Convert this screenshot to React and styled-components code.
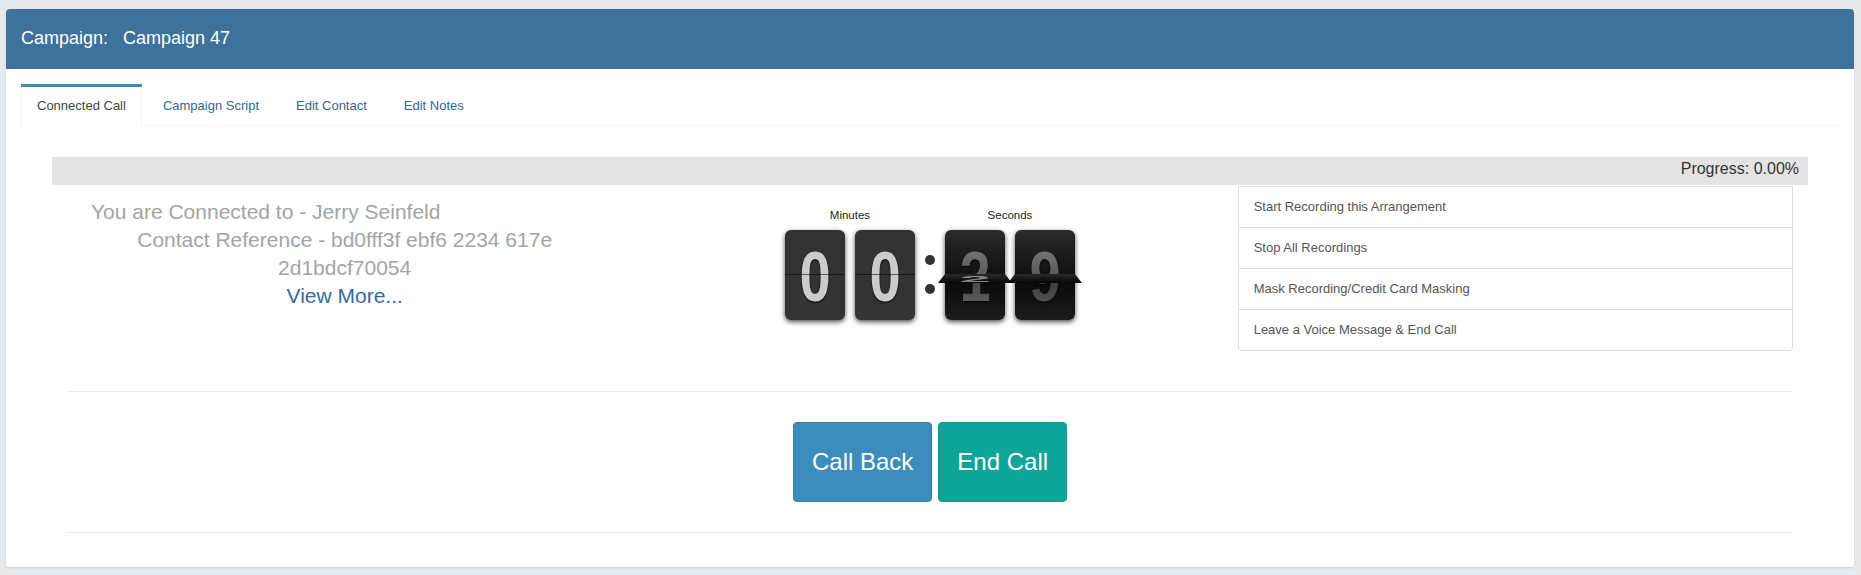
import React from "react";
import styled, { createGlobalStyle } from "styled-components";

const GlobalStyle = createGlobalStyle`
	* {
		box-sizing: border-box;
	}
	html,
	body {
		margin: 0;
		padding: 0;
		background: #e7eaed;
	}
	body {
		font-family: "Liberation Sans", Arial, Helvetica, sans-serif;
		color: #333;
	}
`;

const Page = styled.div`
	padding: 9px 7px 7px 6px;
`;

const Box = styled.div`
	background: #fff;
	border-radius: 4px 4px 2px 2px;
	box-shadow: 0 1px 2px rgba(0, 0, 0, 0.12);
	overflow: hidden;
`;

const BoxHeader = styled.div`
	display: flex;
	align-items: center;
	height: 60px;
	padding: 0 15px 1px;
	background: #3e729b;
	color: #fff;
	font-size: 18px;
`;

const CampaignName = styled.span`
	margin-left: 15px;
`;

const BoxBody = styled.div`
	padding: 15px 15px 3px;
`;

const TabBar = styled.ul`
	display: flex;
	margin: 0;
	padding: 0;
	list-style: none;
	border-bottom: 1px solid #f1f1f1;
`;

const Tab = styled.li`
	margin-right: 5px;
	margin-bottom: ${(p) => (p.$active ? "-1px" : "0")};
	border-top: 3px solid ${(p) => (p.$active ? "#3c8dbc" : "transparent")};
	background: ${(p) => (p.$active ? "#fff" : "transparent")};
`;

const TabLink = styled.a`
	display: block;
	height: ${(p) => (p.$active ? "39px" : "38px")};
	padding: 0 15px;
	line-height: 38px;
	font-size: 13px;
	color: ${(p) => (p.$active ? "#444" : "#356690")};
	text-decoration: none;
	border-left: 1px solid ${(p) => (p.$active ? "#f4f4f4" : "transparent")};
	border-right: 1px solid ${(p) => (p.$active ? "#f4f4f4" : "transparent")};
`;

const TabContent = styled.div`
	padding: 31px 31px 31px;
`;

const Progress = styled.div`
	height: 28px;
	padding-right: 9px;
	background: #e4e4e4;
	text-align: right;
	font-size: 16px;
	line-height: 24px;
	color: #333;
`;

const Row = styled.div`
	display: grid;
	grid-template-columns: repeat(3, 1fr);
`;

const Col = styled.div`
	padding: ${(p) => p.$top || 0}px 15px 0;
`;

const Connected = styled.div`
	font-size: 21px;
	line-height: 28px;
	color: #a4a4a4;
`;

const ConnectedLine = styled.div`
	padding-left: 24px;
`;

const Reference = styled.div`
	max-width: 440px;
	margin: 0 auto;
	text-align: center;
`;

const ViewMore = styled.a`
	display: block;
	text-align: center;
	color: #3a6a94;
	text-decoration: none;
`;

const Clock = styled.div`
	display: flex;
	justify-content: center;
`;

const Unit = styled.div`
	display: flex;
	flex-direction: column;
	align-items: center;
`;

const UnitLabel = styled.div`
	height: 14px;
	margin-bottom: 8px;
	font-size: 11.5px;
	line-height: 14px;
	color: #222;
`;

const Cards = styled.div`
	display: flex;
	gap: 10px;
`;

const Divider = styled.div`
	display: flex;
	flex-direction: column;
	align-items: center;
	gap: 19px;
	width: 30px;
	padding-top: 47px;
`;

const Dot = styled.span`
	width: 10px;
	height: 10px;
	border-radius: 50%;
	background: #323434;
`;

const Card = styled.div`
	position: relative;
	width: 60px;
	height: 90px;
	border-radius: 6px;
	background: ${(p) => (p.$flip ? "transparent" : "#333")};
	box-shadow: 0 2px 5px rgba(0, 0, 0, 0.7);

	&::after {
		content: "";
		position: absolute;
		left: 0;
		right: 0;
		top: 44px;
		height: 1px;
		background: rgba(0, 0, 0, 0.55);
		display: ${(p) => (p.$flip ? "none" : "block")};
	}
`;

const Digit = styled.div`
	height: 90px;
	text-align: center;
	font-size: 71px;
	font-weight: bold;
	line-height: 93px;
	color: ${(p) => p.$color || "#ccc"};
	text-shadow: 0 1px 2px #000;
	transform: scaleX(0.79);
	margin-top: ${(p) => (p.$lower ? "-45px" : "0")};
`;

const Half = styled.div`
	position: absolute;
	left: 0;
	right: 0;
	top: ${(p) => (p.$lower ? "45px" : "0")};
	height: 45px;
	overflow: hidden;
	border-radius: ${(p) => (p.$lower ? "0 0 6px 6px" : "6px 6px 0 0")};
	background: ${(p) =>
		p.$lower
			? "linear-gradient(#0e0e0e, #202020)"
			: "linear-gradient(#2b2b2b, #1b1b1b)"};

	&::after {
		content: "";
		position: absolute;
		inset: 0;
		background: ${(p) =>
			p.$lower
				? "linear-gradient(rgba(0,0,0,0.45), rgba(0,0,0,0.1))"
				: "linear-gradient(rgba(0,0,0,0), rgba(0,0,0,0.35))"};
	}
`;

const Flap = styled.div`
	position: absolute;
	top: 44px;
	left: -7px;
	width: calc(100% + 14px);
	height: 9px;
	overflow: hidden;
	background: linear-gradient(#2a2a2a, #050505);
	clip-path: polygon(7px 0, calc(100% - 7px) 0, 100% 100%, 0 100%);
`;

const Ghost = styled.div`
	height: 90px;
	text-align: center;
	font-size: 71px;
	font-weight: bold;
	line-height: 93px;
	color: rgba(215, 215, 215, 0.6);
	transform: scale(0.79, 0.12);
	transform-origin: top center;
	margin-top: -1px;
`;

const ListGroup = styled.div`
	margin-top: 1px;
	border: 1px solid #ddd;
	border-radius: 0 0 4px 4px;
`;

const ListItem = styled.div`
	height: 41px;
	padding: 0 15px;
	font-size: 13px;
	line-height: 40px;
	color: #555;
	border-bottom: 1px solid #ddd;

	&:last-child {
		height: 40px;
		border-bottom: none;
	}
`;

const Rule = styled.div`
	margin: ${(p) => p.$top}px 15px 0;
	border-top: 1px solid #eaeaea;
`;

const Actions = styled.div`
	display: flex;
	justify-content: center;
	gap: 6px;
	margin-top: 30px;
`;

const ActionButton = styled.button`
	height: 80px;
	padding: 0 18px;
	font-family: inherit;
	font-size: 24px;
	color: #fff;
	border-radius: 4px;
	border: 1px solid ${(p) => p.$border};
	background: ${(p) => p.$bg};
	cursor: pointer;
`;

const tabs = ["Connected Call", "Campaign Script", "Edit Contact", "Edit Notes"];

const actions = [
	"Start Recording this Arrangement",
	"Stop All Recordings",
	"Mask Recording/Credit Card Masking",
	"Leave a Voice Message & End Call",
];

const StaticCard = ({ value }) => (
	<Card>
		<Digit>{value}</Digit>
	</Card>
);

const FlipCard = ({ top, bottom, topColor, bottomColor, ghost }) => (
	<Card $flip>
		<Half>
			<Digit $color={topColor}>{top}</Digit>
		</Half>
		<Half $lower>
			<Digit $lower $color={bottomColor}>
				{bottom}
			</Digit>
		</Half>
		<Flap>{ghost && <Ghost>{ghost}</Ghost>}</Flap>
	</Card>
);

const App = () => {
	return (
		<Page>
			<GlobalStyle />
			<Box>
				<BoxHeader>
					Campaign:
					<CampaignName>Campaign 47</CampaignName>
				</BoxHeader>
				<BoxBody>
					<TabBar>
						{tabs.map((t, i) => (
							<Tab key={t} $active={i === 0}>
								<TabLink href="#" $active={i === 0}>
									{t}
								</TabLink>
							</Tab>
						))}
					</TabBar>
					<TabContent>
						<Progress>Progress: 0.00%</Progress>
						<Row>
							<Col $top={13}>
								<Connected>
									<ConnectedLine>You are Connected to - Jerry Seinfeld</ConnectedLine>
									<Reference>
										Contact Reference - bd0fff3f ebf6 2234 617e 2d1bdcf70054
									</Reference>
									<ViewMore href="#">View More...</ViewMore>
								</Connected>
							</Col>
							<Col $top={23}>
								<Clock>
									<Unit>
										<UnitLabel>Minutes</UnitLabel>
										<Cards>
											<StaticCard value="0" />
											<StaticCard value="0" />
										</Cards>
									</Unit>
									<Divider>
										<Dot />
										<Dot />
									</Divider>
									<Unit>
										<UnitLabel>Seconds</UnitLabel>
										<Cards>
											<FlipCard top="2" bottom="1" topColor="#8a8a8a" bottomColor="#777" ghost="2" />
											<FlipCard top="9" bottom="9" topColor="#8a8a8a" bottomColor="#6a6a6a" />
										</Cards>
									</Unit>
								</Clock>
							</Col>
							<Col>
								<ListGroup>
									{actions.map((a) => (
										<ListItem key={a}>{a}</ListItem>
									))}
								</ListGroup>
							</Col>
						</Row>
						<Rule $top={40} />
						<Actions>
							<ActionButton $bg="#3c8dbc" $border="#367fa9">
								Call Back
							</ActionButton>
							<ActionButton $bg="#0ca597" $border="#0b9c8f">
								End Call
							</ActionButton>
						</Actions>
						<Rule $top={30} />
					</TabContent>
				</BoxBody>
			</Box>
		</Page>
	);
};

export default App;
